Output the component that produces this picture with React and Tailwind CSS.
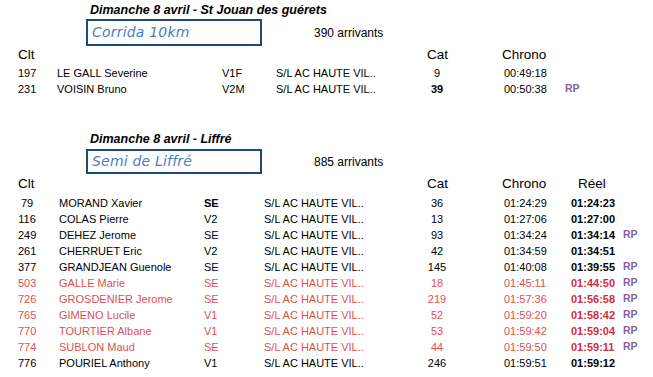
import React from "react";

const RED = "text-[#e0504f]";

const rows2 = [
  { clt: "79", name: "MORAND Xavier", cat: "SE", catBold: true, num: "36", chrono: "01:24:29", reel: "01:24:23", rp: false, red: false },
  { clt: "116", name: "COLAS Pierre", cat: "V2", num: "13", chrono: "01:27:06", reel: "01:27:00", rp: false, red: false },
  { clt: "249", name: "DEHEZ Jerome", cat: "SE", num: "93", chrono: "01:34:24", reel: "01:34:14", rp: true, red: false },
  { clt: "261", name: "CHERRUET Eric", cat: "V2", num: "42", chrono: "01:34:59", reel: "01:34:51", rp: false, red: false },
  { clt: "377", name: "GRANDJEAN Guenole", cat: "SE", num: "145", chrono: "01:40:08", reel: "01:39:55", rp: true, red: false },
  { clt: "503", name: "GALLE Marie", cat: "SE", num: "18", chrono: "01:45:11", reel: "01:44:50", rp: true, red: true },
  { clt: "726", name: "GROSDENIER Jerome", cat: "SE", num: "219", chrono: "01:57:36", reel: "01:56:58", rp: true, red: true },
  { clt: "765", name: "GIMENO Lucile", cat: "V1", num: "52", chrono: "01:59:20", reel: "01:58:42", rp: true, red: true },
  { clt: "770", name: "TOURTIER Albane", cat: "V1", num: "53", chrono: "01:59:42", reel: "01:59:04", rp: true, red: true },
  { clt: "774", name: "SUBLON Maud", cat: "SE", num: "44", chrono: "01:59:50", reel: "01:59:11", rp: true, red: true },
  { clt: "776", name: "POURIEL Anthony", cat: "V1", num: "246", chrono: "01:59:51", reel: "01:59:12", rp: false, red: false },
];

const rows1 = [
  { clt: "197", name: "LE GALL Severine", cat: "V1F", num: "9", numBold: false, chrono: "00:49:18", rp: false },
  { clt: "231", name: "VOISIN Bruno", cat: "V2M", num: "39", numBold: true, chrono: "00:50:38", rp: true },
];

function Heading({ children }) {
  return (
    <div className="h-[14px] pl-[90px] flex items-center font-bold italic text-[12.5px] whitespace-nowrap text-black">
      {children}
    </div>
  );
}

function Box({ label, h, count }) {
  return (
    <div className="flex items-center">
      <div
        className={`ml-[86px] w-[176px] ${h} border-2 border-[#1f4a7c] flex items-center pl-[4px] italic text-[14px] text-[#4b7cc3] whitespace-nowrap font-['DejaVu_Sans',sans-serif] tracking-[0.2px]`}
      >
        {label}
      </div>
      <div className="ml-[52px] text-[12px] whitespace-nowrap">{count}</div>
    </div>
  );
}

export default function App() {
  return (
    <div className="w-[653px] h-[377px] bg-white overflow-hidden text-black font-['Liberation_Sans',Arial,sans-serif] text-[11px]">
      {/* Section 1 */}
      <div className="pt-[3px]">
        <Heading>Dimanche 8 avril - St Jouan des guérets</Heading>
        <div className="mt-[2px]">
          <Box label="Corrida  10km" h="h-[27px]" count="390 arrivants" />
        </div>
        <div className="h-[19px] flex items-center text-[13.5px] whitespace-nowrap">
          <div className="pl-[18px] w-[427px]">Clt</div>
          <div className="w-[75px]">Cat</div>
          <div>Chrono</div>
        </div>
        {rows1.map((r) => (
          <div key={r.clt} className="h-[16px] flex items-center whitespace-nowrap">
            <div className="pl-[18px] w-[57px]">{r.clt}</div>
            <div className="w-[165px]">{r.name}</div>
            <div className="w-[54px]">{r.cat}</div>
            <div className="w-[151px]">S/L AC HAUTE VIL..</div>
            <div className={`w-[20px] text-center ${r.numBold ? "font-bold" : ""}`}>{r.num}</div>
            <div className="w-[57px]"></div>
            <div className="w-[61px]">{r.chrono}</div>
            <div className="font-bold text-[#8064a2] text-[10.5px]">{r.rp ? "RP" : ""}</div>
          </div>
        ))}
      </div>

      {/* Section 2 */}
      <div className="mt-[35px]">
        <Heading>Dimanche 8 avril - Liffré</Heading>
        <div className="mt-[3px]">
          <Box label="Semi de Liffré" h="h-[25px]" count="885 arrivants" />
        </div>
        <div className="h-[21px] flex items-center text-[13.5px] whitespace-nowrap">
          <div className="pl-[18px] w-[427px]">Clt</div>
          <div className="w-[75px]">Cat</div>
          <div className="w-[76px]">Chrono</div>
          <div>Réel</div>
        </div>
        {rows2.map((r) => (
          <div
            key={r.clt}
            className={`h-[16px] flex items-center whitespace-nowrap ${r.red ? RED : "text-black"}`}
          >
            <div className="ml-[18px] w-[18px] text-center">{r.clt}</div>
            <div className="ml-[23px] w-[145px]">{r.name}</div>
            <div className={`w-[60px] ${r.catBold ? "font-bold" : ""}`}>{r.cat}</div>
            <div className="w-[163px]">S/L AC HAUTE VIL..</div>
            <div className="w-[20px] text-center">{r.num}</div>
            <div className="w-[57px]"></div>
            <div className="w-[67px]">{r.chrono}</div>
            <div className={`w-[52px] font-bold ${r.red ? "text-[#d42c3e]" : "text-black"}`}>{r.reel}</div>
            <div className="font-bold text-[#8064a2] text-[10.5px]">{r.rp ? "RP" : ""}</div>
          </div>
        ))}
      </div>
    </div>
  );
}
